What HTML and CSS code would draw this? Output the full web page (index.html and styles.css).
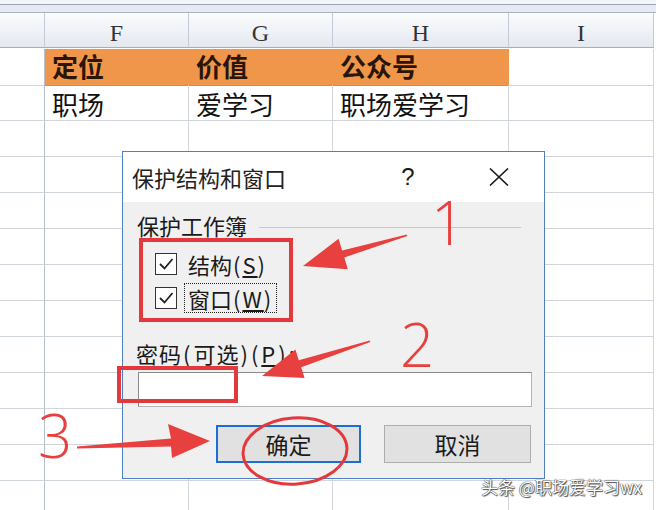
FILE: index.html
```html
<!DOCTYPE html>
<html>
<head lang="zh">
    <meta charset="UTF-8">
    <title>保护结构和窗口</title>
    <link rel="stylesheet" href="styles.css">
</head>
<body>
<div id="sheet">
    <div class="topbar"></div>
    <div class="grid">
        <div class="hd corner"></div><div class="hd">F</div><div class="hd">G</div><div class="hd">H</div><div class="hd">I</div>

        <div class="rh tall"></div><div class="c tall orange b">定位</div><div class="c tall orange b">价值</div><div class="c tall orange b">公众号</div><div class="c tall"></div>
        <div class="rh"></div><div class="c low">职场</div><div class="c low">爱学习</div><div class="c low">职场爱学习</div><div class="c"></div>

        <div class="rh"></div><div class="c"></div><div class="c"></div><div class="c"></div><div class="c"></div>
        <div class="rh"></div><div class="c"></div><div class="c"></div><div class="c"></div><div class="c"></div>
        <div class="rh"></div><div class="c"></div><div class="c"></div><div class="c"></div><div class="c"></div>
        <div class="rh"></div><div class="c"></div><div class="c"></div><div class="c"></div><div class="c"></div>
        <div class="rh"></div><div class="c"></div><div class="c"></div><div class="c"></div><div class="c"></div>
        <div class="rh"></div><div class="c"></div><div class="c"></div><div class="c"></div><div class="c"></div>
        <div class="rh"></div><div class="c"></div><div class="c"></div><div class="c"></div><div class="c"></div>
        <div class="rh"></div><div class="c"></div><div class="c"></div><div class="c"></div><div class="c"></div>
        <div class="rh"></div><div class="c"></div><div class="c"></div><div class="c"></div><div class="c"></div>
        <div class="rh"></div><div class="c"></div><div class="c"></div><div class="c"></div><div class="c"></div>
        <div class="rh"></div><div class="c"></div><div class="c"></div><div class="c"></div><div class="c"></div>
    </div>
</div>

<!-- 对话框 -->
<div id="dlg">
    <div class="titlebar">
        <span class="title">保护结构和窗口</span>
        <span class="help">?</span>
        <span class="close">
            <svg width="20" height="18" viewBox="0 0 20 18"><path d="M1 0.5 L19 17.5 M19 0.5 L1 17.5" stroke="#1a1a1a" stroke-width="1.6" fill="none"/></svg>
        </span>
    </div>
    <div class="body">
        <div class="group">
            <span>保护工作簿</span>
            <span class="line"></span>
        </div>
        <div class="check">
            <span class="box"><svg width="20" height="20" viewBox="0 0 20 20"><path d="M4 10 L8.5 14.5 L16.5 5" stroke="#222" stroke-width="1.8" fill="none"/></svg></span>
            <span class="lbl">结构<span class="key">(<u>S</u>)</span></span>
        </div>
        <div class="check">
            <span class="box"><svg width="20" height="20" viewBox="0 0 20 20"><path d="M4 10 L8.5 14.5 L16.5 5" stroke="#222" stroke-width="1.8" fill="none"/></svg></span>
            <span class="lbl focus">窗口<span class="key">(<u>W</u>)</span></span>
        </div>
        <div class="pwlabel">密码<span class="key">(</span>可选<span class="key">)(<u>P</u>):</span></div>
        <div class="input"></div>
        <div class="buttons">
            <span class="btn ok">确定</span>
            <span class="btn">取消</span>
        </div>
    </div>
</div>

<!-- 标注 -->
<svg id="marks" width="656" height="510" viewBox="0 0 656 510">
    <rect x="141" y="240" width="150" height="80" fill="none" stroke="#e4393c" stroke-width="4"/>
    <rect x="119" y="368" width="117" height="33" fill="none" stroke="#e4393c" stroke-width="4"/>
    <ellipse cx="295" cy="451" rx="52" ry="33" transform="rotate(-4 295 451)" fill="none" stroke="#e4393c" stroke-width="3"/>

    <polygon fill="#e8403f" points="303,266 338.6,238.7 342.1,250.5 406.7,234.5 407.3,236 344.3,257.5 347.8,269.3"/>
    <polygon fill="#e8403f" points="262,376 295.4,349.4 298.8,360.2 369.7,340.5 370.3,342 301.2,367.2 304.6,378"/>
    <polygon fill="#e8403f" points="210,441 168,424 171,438.5 77,446.5 77,448.5 171,446.5 172,458"/>

    <text class="num" x="448" y="245">1</text>
    <text class="num" x="417" y="367">2</text>
    <text class="num" x="55" y="458">3</text>
</svg>

<div class="wm">头条 @职场爱学习wx</div>
</body>
</html>
```

FILE: styles.css
```css
* {
    margin: 0;
    padding: 0;
    box-sizing: border-box;
}
body {
    width: 656px;
    height: 510px;
    overflow: hidden;
    position: relative;
    background: #fff;
    font-family: "Noto Sans CJK SC", "Liberation Sans", sans-serif;
}

/* 表格 */
.topbar {
    height: 13px;
    background: linear-gradient(#f3f5f8 0, #f3f5f8 4px, #9aa6b6 4px, #9aa6b6 5px, #e7ebf1 5px, #e7ebf1 12px, #a7b2c2 12px);
}
.grid {
    display: grid;
    grid-template-columns: 45px 144px 144px 176px 145px;
    grid-auto-rows: 36px;
}
.hd {
    height: 35px;
    background: linear-gradient(#fbfcfd, #e4e9f0);
    border-right: 1px solid #c3cad5;
    border-bottom: 1px solid #a3afc0;
    font-family: "Liberation Serif", serif;
    font-size: 24px;
    color: #333;
    text-align: center;
    line-height: 40px;
}
.rh {
    border-right: 1px solid #b6bfcb;
    border-bottom: 1px solid #d0d4db;
}
.c {
    border-right: 1px solid #d0d4db;
    border-bottom: 1px solid #d0d4db;
    font-size: 26px;
    line-height: 34px;
    padding-left: 7px;
    color: #111;
    white-space: nowrap;
}
.c.low {
    line-height: 37px;
}
.tall {
    height: 37px;
}
.grid > .tall {
    align-self: start;
}
.orange {
    background: #f0964a;
    border-right-color: #f0964a;
    border-bottom-color: #e08a40;
}
.b {
    font-weight: bold;
    color: #2a1608;
}

/* 对话框 */
#dlg {
    position: absolute;
    left: 122px;
    top: 151px;
    width: 423px;
    height: 328px;
    border: 1px solid #4f7fbf;
    background: #f0f0f0;
    display: flex;
    flex-direction: column;
    color: #1a1a1a;
    font-size: 22px;
}
.titlebar {
    height: 50px;
    background: #fff;
    display: flex;
    align-items: center;
    padding-left: 9px;
}
.title {
    font-size: 22px;
    color: #222;
}
.help {
    margin-left: auto;
    width: 40px;
    text-align: center;
    font-family: "Liberation Sans", sans-serif;
    font-size: 24px;
}
.close {
    width: 40px;
    margin-left: 51px;
    margin-right: 25px;
    display: flex;
    justify-content: center;
}
.body {
    flex: 1;
    padding: 0 13px;
    display: flex;
    flex-direction: column;
}
.group {
    display: flex;
    align-items: center;
    margin-top: 8px;
    line-height: 30px;
    padding-left: 1px;
}
.group .line {
    flex: 1;
    height: 1px;
    background: #c8c8c8;
    margin: 4px 10px 0 12px;
}
.check {
    height: 34px;
    display: flex;
    align-items: center;
    padding-left: 19px;
}
.group + .check {
    margin-top: 7px;
}
.box {
    width: 22px;
    height: 22px;
    border: 1.5px solid #333;
    background: #fff;
    display: flex;
    align-items: center;
    justify-content: center;
}
.lbl {
    margin-left: 7px;
    padding: 0 3px;
    line-height: 28px;
    border: 1px solid transparent;
}
.lbl.focus {
    border: 1px dotted #222;
}
.key {
    letter-spacing: 2px;
    margin-left: 1px;
}
.pwlabel {
    margin-top: 23px;
    line-height: 30px;
    letter-spacing: 1px;
}
.pwlabel .key {
    letter-spacing: 3px;
}
.input {
    margin-top: 4px;
    margin-left: 2px;
    width: 394px;
    height: 35px;
    background: #fff;
    border: 1px solid #b4b4b4;
    border-top-color: #8a8a8a;
    border-left-color: #8a8a8a;
}
.buttons {
    margin-top: 18px;
    display: flex;
    justify-content: flex-end;
    gap: 23px;
}
.btn {
    width: 147px;
    height: 38px;
    background: #e1e1e1;
    border: 1px solid #adadad;
    text-align: center;
    line-height: 36px;
    font-size: 23px;
}
.btn.ok {
    width: 145px;
    border: 2px solid #1a6fd0;
    line-height: 34px;
}

/* 标注 */
#marks {
    position: absolute;
    left: 0;
    top: 0;
}
.num {
    font-family: "Open Sans", "Liberation Sans", sans-serif;
    font-weight: 300;
    font-size: 60px;
    fill: #e8403f;
    text-anchor: middle;
}
.wm {
    position: absolute;
    left: 481px;
    top: 476px;
    font-size: 17px;
    line-height: 22px;
    color: #fff;
    text-shadow: 0 0 1px #333, 0 0 1px #333, 1px 1px 1px #555;
    white-space: nowrap;
}
```
